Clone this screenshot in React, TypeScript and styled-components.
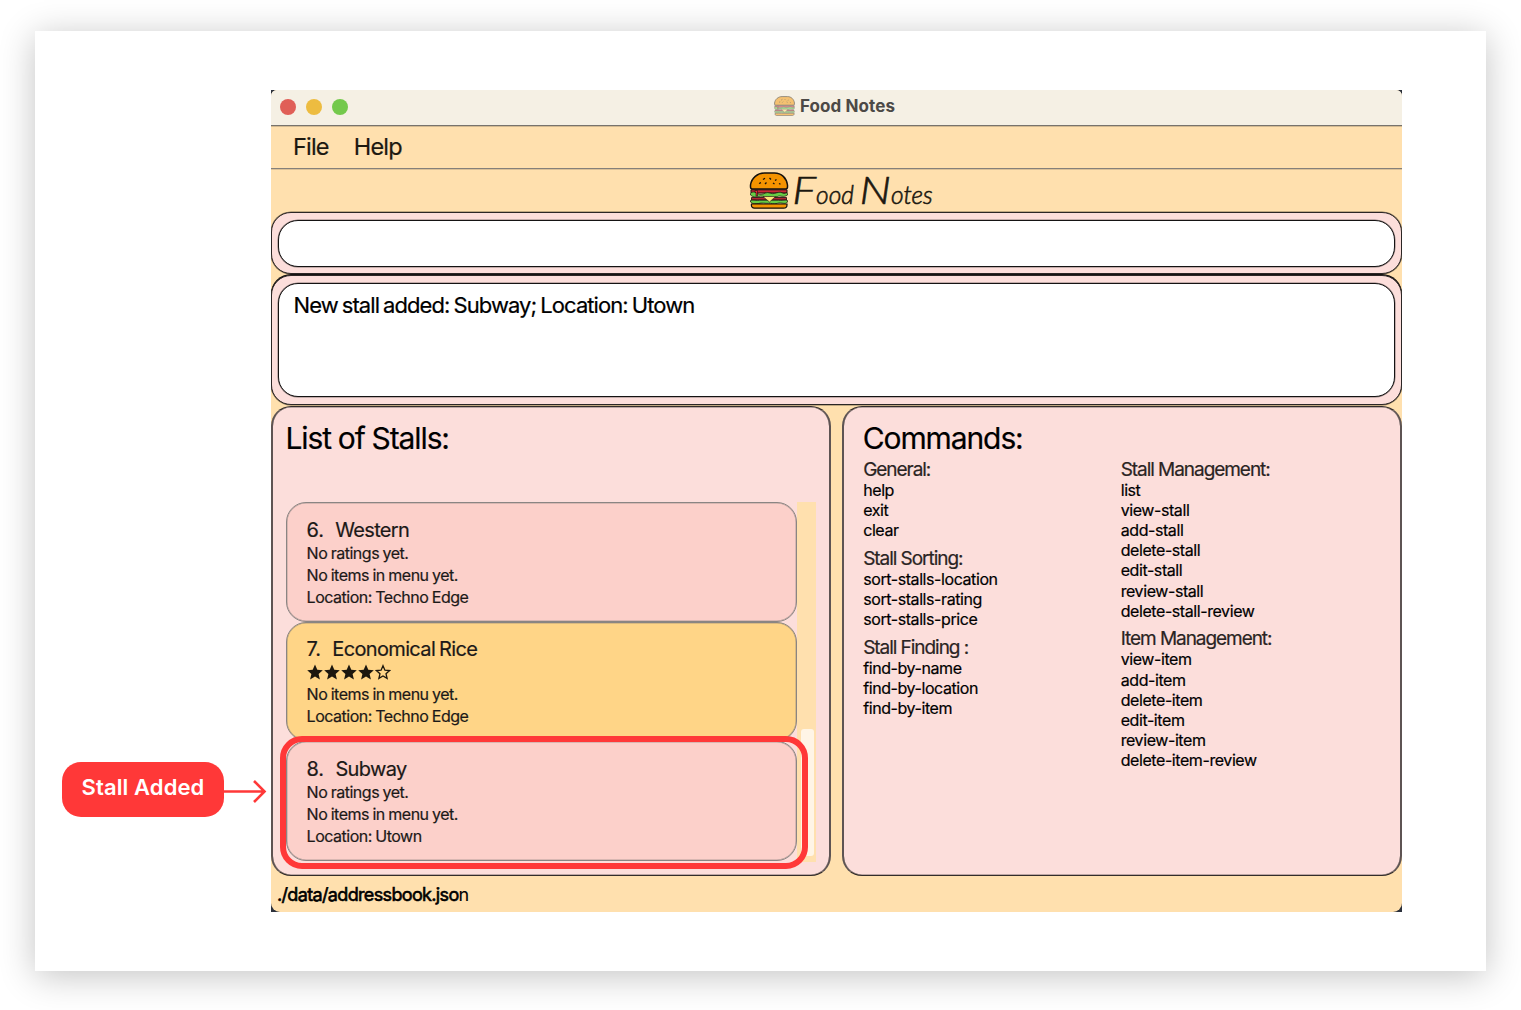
import React from "react";
import styled, { createGlobalStyle } from "styled-components";

const GlobalStyle = createGlobalStyle`
  * { box-sizing: border-box; }
  body {
    margin: 0;
    background: #fff;
    font-family: Inter, "Liberation Sans", sans-serif;
    color: #000;
    overflow: hidden;
  }
`;

const Page = styled.main`
  width: 1521px;
  height: 1010px;
  padding: 31px 35px 39px;
`;

const Sheet = styled.section`
  position: relative;
  width: 1451px;
  height: 940px;
  padding: 59px 0 0 236px;
  background: #fff;
  box-shadow: 0 5px 34px rgba(0, 0, 0, 0.24);
`;

const Desktop = styled.div`
  width: 1131px;
  height: 822px;
  background: #2c313c;
`;

const Window = styled.div`
  display: flex;
  flex-direction: column;
  width: 100%;
  height: 100%;
  border-radius: 6px 6px 9px 9px;
  overflow: hidden;
  background: #ffe0ae;
  -webkit-text-stroke: 0.2px currentColor;
`;

const TitleBar = styled.header`
  position: relative;
  display: flex;
  align-items: center;
  justify-content: center;
  flex: none;
  height: 36px;
  padding: 0 4px 3px 0;
  background: #f5f0e4;
  border-bottom: 1px solid #77736c;
  box-shadow: 0 1px 0 rgba(80, 70, 60, 0.25);
`;

const Lights = styled.div`
  position: absolute;
  left: 9px;
  top: 9px;
  display: flex;
  gap: 10px;
`;

const Light = styled.i<{ $color: string }>`
  width: 16px;
  height: 16px;
  border-radius: 50%;
  background: ${(p) => p.$color};
`;

const AppTitle = styled.span`
  margin-left: 5px;
  font-size: 17px;
  font-weight: 700;
  line-height: 20px;
  letter-spacing: 0.1px;
  color: #4c4946;
  -webkit-text-stroke: 0;
`;

const Faded = styled.span`
  display: flex;
  opacity: 0.5;
`;

const MenuBar = styled.nav`
  display: flex;
  flex: none;
  gap: 25px;
  height: 43px;
  padding-left: 22px;
  border-bottom: 1px solid #85807a;
  box-shadow: 0 1px 0 rgba(80, 70, 60, 0.2);
  font-size: 23.5px;
  line-height: 42px;
  letter-spacing: -0.8px;
  color: #1c1810;
`;

const Brand = styled.div`
  display: flex;
  flex: none;
  height: 43px;
  padding: 3px 0 0 478px;
`;

const Script = styled.span`
  display: flex;
  align-items: baseline;
  margin: -4px 0 0 4.5px;
  font-family: Lato, sans-serif;
  font-style: italic;
  font-weight: 300;
  font-size: 24.5px;
  line-height: 42px;
  color: #1c1810;
  -webkit-text-stroke: 0.6px #1c1810;
`;

const Capital = styled.span<{ $gap?: number }>`
  display: inline-block;
  margin-left: ${(p) => p.$gap ?? 0}px;
  margin-right: 2.5px;
  font-size: 38px;
  transform: scaleX(1.18);
`;

const Frame = styled.div<{ $h: number; $top?: number }>`
  display: flex;
  flex: none;
  height: ${(p) => p.$h}px;
  margin-top: ${(p) => p.$top ?? 0}px;
  padding: 7px 6px 6px;
  background: #fcdedb;
  border: 1px solid #2b2625;
  box-shadow: 0 0 0 0.5px rgba(0, 0, 0, 0.5);
  border-radius: 20px;
`;

const ResultFrame = styled(Frame)`
  padding-bottom: 7px;
  box-shadow: 0 -1px 0 #151313, 0 0 0 0.5px rgba(0, 0, 0, 0.5);
`;

const Field = styled.div`
  flex: 1;
  padding: 7px 14.5px;
  background: #fff;
  border: 1px solid #151313;
  box-shadow: 0 0 0 0.5px rgba(0, 0, 0, 0.45);
  border-radius: 20px;
  font-size: 22px;
  line-height: 28px;
  letter-spacing: -0.93px;
  word-spacing: -1.2px;
`;

const Panels = styled.div`
  display: grid;
  grid-template-columns: 560px 560px;
  gap: 11px;
  flex: none;
  height: 470px;
  margin-top: 1px;
`;

const Panel = styled.section<{ $left: number }>`
  min-width: 0;
  padding: 14px 12px 0 ${(p) => p.$left}px;
  background: #fcdedb;
  border: solid #5e5453;
  border-width: 1px 2px;
  border-top-color: #332d2b;
  border-bottom-color: #332d2b;
  box-shadow: inset 0 -0.5px 0 rgba(0, 0, 0, 0.5), inset 0 0.5px 0 rgba(0, 0, 0, 0.5);
  border-radius: 20px;
`;

const Heading = styled.h1`
  margin: 0 0 0 -0.5px;
  padding-bottom: 1.5px;
  font-size: 30px;
  font-weight: 400;
  line-height: 35px;
  letter-spacing: -1.1px;
  word-spacing: -0.5px;
`;

const StallScroll = styled.div`
  display: flex;
  height: 360px;
  margin-top: 44.5px;
`;

const StallList = styled.div`
  width: 511px;
`;

const Card = styled.article<{ $alt?: boolean }>`
  height: 119.7px;
  padding: 14.5px 20px 0 19.6px;
  background: ${(p) => (p.$alt ? "#ffd587" : "#fcd0ca")};
  border: 1px solid #8a8583;
  box-shadow: inset 0 0 0 0.5px rgba(110, 110, 110, 0.5);
  border-radius: 20px;
  font-size: 16px;
  line-height: 22px;
  letter-spacing: -0.5px;
  word-spacing: -0.5px;
  color: #1c1918;
`;

const StallName = styled.h2`
  display: flex;
  gap: 11.5px;
  margin: 0;
  font-size: 20px;
  font-weight: 400;
  line-height: 24.3px;
  letter-spacing: -0.65px;
  word-spacing: -1px;
`;

const StallNumber = styled.span`
  letter-spacing: -0.2px;
`;

const Stars = styled.div`
  display: flex;
  align-items: center;
  gap: 1px;
  height: 22px;
`;

const Track = styled.div`
  width: 19px;
  padding: 227px 2px 5px 4px;
  background: #ffe0ae;
`;

const Thumb = styled.div`
  height: 127px;
  border-radius: 3px;
  background: #fff5e6;
`;

const Columns = styled.div`
  display: grid;
  grid-template-columns: 257.5px 1fr;
`;

const Group = styled.ul`
  margin: 0 0 6.4px;
  padding: 0;
  list-style: none;
  font-size: 16px;
  line-height: 20.2px;
  letter-spacing: -0.42px;
`;

const GroupTitle = styled.li`
  margin-bottom: -2px;
  font-size: 19px;
  line-height: 24px;
  letter-spacing: -1.05px;
  color: #2a2423;
`;

const StatusBar = styled.footer`
  padding: 6px 0 0 6px;
  font-size: 18px;
  line-height: 26px;
  letter-spacing: -0.65px;
  -webkit-text-stroke: 0.6px #000;
`;

const Thin = styled.span`
  -webkit-text-stroke: 0.1px #000;
`;

const Highlight = styled.div`
  position: absolute;
  left: 245px;
  top: 705px;
  width: 528px;
  height: 133px;
  border: 6px solid #ff3838;
  border-radius: 22px;
`;

const Callout = styled.div`
  position: absolute;
  left: 27px;
  top: 731px;
  display: flex;
  align-items: center;
`;

const CalloutLabel = styled.div`
  width: 162px;
  height: 55px;
  border-radius: 19px;
  background: #ff3838;
  color: #fff;
  font-size: 22px;
  font-weight: 600;
  line-height: 51px;
  text-align: center;
  letter-spacing: 0.1px;
`;

function Burger({ width, height }: { width: number; height: number }) {
  return (
    <svg width={width} height={height} viewBox="0 0 39 37">
      <path d="M1 15V13C2 6 8 1 15 1H25C32 1 37 6 38 13V15C38 16.500 37 17 36 17H3C2 17 1 16.500 1 15Z" fill="#f59300" stroke="#15110d" strokeWidth="1.500" />
      <path d="M13.500 7.500l2-1.300M20 6l1.500 1.500M27 7.500l-1.500 1M9.500 11.500l2-.8M17 10.500l-1.500 1.500M23.500 11l1.500 1M29.500 11.500l1.500.8" stroke="#15110d" strokeWidth="1.300" />
      <path d="M1.500 17.800H37.500V21H1.500Z" fill="#c92a38" stroke="#15110d" strokeWidth="1" />
      <path d="M1 21.500C3 19 6 20 8 21.500S13 22.500 16 21S22 22.500 25 21.500S31 19.500 33 21S37 20 38 21.500V23C34 26 31 23 28 24.500S21 24 18 24.500S12 23.500 9 24.500S3 25 1 23Z" fill="#67cd45" stroke="#15110d" strokeWidth=".7" />
      <path d="M5.500 18.500H8V24H6.500V20.500H5.500Z" fill="#e8283c" stroke="#15110d" strokeWidth=".6" />
      <path d="M2 25.500H37V28H2Z" fill="#ae2632" stroke="#15110d" strokeWidth=".8" />
      <path d="M1 28.500C4 27.500 7 29 10 28.300H29C32 29 35 27.500 38 28.500V30C36 33 32 30 28 31.300S22 31 19 31.300S12 30.500 9 31.500S3 32 1 30Z" fill="#67cd45" stroke="#15110d" strokeWidth=".7" />
      <path d="M13.500 24.500H26L20 30Z" fill="#ffe27a" stroke="#15110d" strokeWidth=".5" />
      <path d="M2 32C7 31.500 10 32 14 32H37.500V33C37.500 35 36 36.200 34 36.200H5C3 36.200 1.500 35 2 32Z" fill="#f59300" stroke="#15110d" strokeWidth="1.200" />
    </svg>
  );
}

const STAR = "M8 .5L10.300 5.700L15.800 6.200L11.600 9.900L12.900 15.400L8 12.500L3.100 15.400L4.400 9.900L.2 6.200L5.700 5.700Z";
const STAR_OUTLINE = "M8 1.700L9.900 6.200L14.600 6.600L11 9.700L12.100 14.300L8 11.900L3.900 14.300L5 9.700L1.400 6.600L6.100 6.200Z";

function Rating({ value }: { value: number }) {
  return (
    <Stars>
      {[1, 2, 3, 4, 5].map((n) => (
        <svg key={n} width="16" height="16" viewBox="0 0 16 16">
          {n <= value ? (
            <path d={STAR} fill="#1c170e" />
          ) : (
            <path d={STAR_OUTLINE} fill="none" stroke="#1c170e" strokeWidth={1.3} />
          )}
        </svg>
      ))}
    </Stars>
  );
}

type Stall = { no: number; name: string; location: string; rating?: number };

const stalls: Stall[] = [
  { no: 6, name: "Western", location: "Techno Edge" },
  { no: 7, name: "Economical Rice", location: "Techno Edge", rating: 4 },
  { no: 8, name: "Subway", location: "Utown" },
];

const commands = [
  [
    { title: "General:", items: ["help", "exit", "clear"] },
    { title: "Stall Sorting:", items: ["sort-stalls-location", "sort-stalls-rating", "sort-stalls-price"] },
    { title: "Stall Finding :", items: ["find-by-name", "find-by-location", "find-by-item"] },
  ],
  [
    {
      title: "Stall Management:",
      items: ["list", "view-stall", "add-stall", "delete-stall", "edit-stall", "review-stall", "delete-stall-review"],
    },
    {
      title: "Item Management:",
      items: ["view-item", "add-item", "delete-item", "edit-item", "review-item", "delete-item-review"],
    },
  ],
];

export default function App() {
  return (
    <Page>
      <GlobalStyle />
      <Sheet>
        <Desktop>
          <Window>
            <TitleBar>
              <Lights>
                <Light $color="#e05f57" />
                <Light $color="#edbc40" />
                <Light $color="#74c94c" />
              </Lights>
              <Faded>
                <Burger width={21} height={20} />
              </Faded>
              <AppTitle>Food Notes</AppTitle>
            </TitleBar>
            <MenuBar>
              <span>File</span>
              <span>Help</span>
            </MenuBar>
            <Brand>
              <Burger width={40} height={37} />
              <Script>
                <Capital>F</Capital>ood<Capital $gap={8}>N</Capital>otes
              </Script>
            </Brand>
            <Frame $h={62}>
              <Field />
            </Frame>
            <ResultFrame $h={130} $top={1}>
              <Field>New stall added: Subway; Location: Utown</Field>
            </ResultFrame>
            <Panels>
              <Panel $left={13}>
                <Heading>List of Stalls:</Heading>
                <StallScroll>
                  <StallList>
                    {stalls.map((s) => (
                      <Card key={s.no} $alt={s.no % 2 === 1}>
                        <StallName>
                          <StallNumber>{s.no}.</StallNumber>
                          <span>{s.name}</span>
                        </StallName>
                        {s.rating ? <Rating value={s.rating} /> : <div>No ratings yet.</div>}
                        <div>No items in menu yet.</div>
                        <div>Location: {s.location}</div>
                      </Card>
                    ))}
                  </StallList>
                  <Track>
                    <Thumb />
                  </Track>
                </StallScroll>
              </Panel>
              <Panel $left={19.2}>
                <Heading>Commands:</Heading>
                <Columns>
                  {commands.map((column, i) => (
                    <div key={i}>
                      {column.map((g) => (
                        <Group key={g.title}>
                          <GroupTitle>{g.title}</GroupTitle>
                          {g.items.map((item) => (
                            <li key={item}>{item}</li>
                          ))}
                        </Group>
                      ))}
                    </div>
                  ))}
                </Columns>
              </Panel>
            </Panels>
            <StatusBar>
              ./data/addressbook.jso<Thin>n</Thin>
            </StatusBar>
          </Window>
        </Desktop>
        <Highlight />
        <Callout>
          <CalloutLabel>Stall Added</CalloutLabel>
          <svg width="43" height="26" viewBox="0 0 43 26" fill="none" stroke="#ff3838" strokeWidth="2.600">
            <path d="M0 14.500H40.500M30 4L40.500 14.500L30 25" />
          </svg>
        </Callout>
      </Sheet>
    </Page>
  );
}
